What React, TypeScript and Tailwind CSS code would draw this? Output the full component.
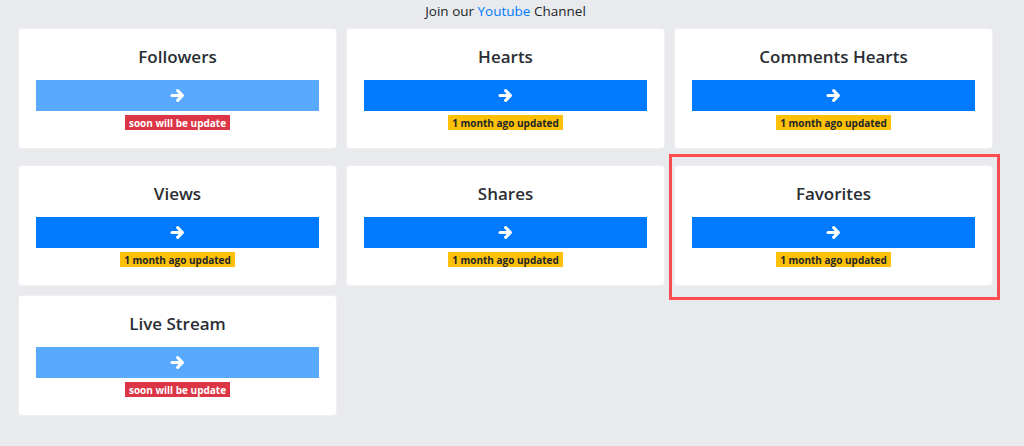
import React from 'react';

type Service = {
  title: string;
  active: boolean;
  highlight?: boolean;
};

const rows: Service[][] = [
  [
    { title: 'Followers', active: false },
    { title: 'Hearts', active: true },
    { title: 'Comments Hearts', active: true },
  ],
  [
    { title: 'Views', active: true },
    { title: 'Shares', active: true },
    { title: 'Favorites', active: true, highlight: true },
  ],
  [{ title: 'Live Stream', active: false }],
];

function ArrowRight() {
  return (
    <svg viewBox="0 0 16 16" className="w-[15px] h-[15px]" fill="none" stroke="white" strokeWidth={3.4} strokeLinecap="round" strokeLinejoin="round">
      <path d="M2.2 8h10.5" />
      <path d="M8.2 2.8 13.2 8l-5 5.2" />
    </svg>
  );
}

function ServiceCard({ service }: { service: Service }) {
  return (
    <div className="relative">
      {service.highlight && (
        <div className="absolute left-[-5px] top-[-11px] right-[-7px] bottom-[-14px] border-[3px] border-[#ff4d4f] pointer-events-none" />
      )}
      <div className="bg-white rounded-[4px] border border-black/[0.06] h-[121px] pt-[17px] px-[17px] flex flex-col items-center">
        <h5 className="text-[17px] leading-[22px] font-semibold text-[#2a2e33] mb-[12px]">
          {service.title}
        </h5>
        <button
          className={`w-full h-[31px] flex items-center justify-center ${
            service.active ? 'bg-[#007bff]' : 'bg-[#59a9ff]'
          }`}
        >
          <ArrowRight />
        </button>
        {service.active ? (
          <span className="mt-[4px] h-[15px] px-[4px] flex items-center bg-[#ffc107] text-[#212529] text-[10px] font-bold leading-none">
            1 month ago updated
          </span>
        ) : (
          <span className="mt-[4px] h-[15px] px-[4px] flex items-center bg-[#dc3545] text-white text-[10px] font-bold leading-none">
            soon will be update
          </span>
        )}
      </div>
    </div>
  );
}

export default function App() {
  return (
    <div
      className="w-[1024px] h-[446px] bg-[#e9eaee] overflow-hidden"
      style={{ fontFamily: '"Open Sans", "Noto Sans", sans-serif' }}
    >
      <div className="w-[975px] ml-[18px]">
        <p className="h-[28px] pt-[1px] text-center text-[13.5px] leading-[20px] font-medium text-[#212529]">
          Join our <span className="text-[#007bff]">Youtube</span> Channel
        </p>
        <div className="flex flex-col">
          {rows.map((row, i) => (
            <div
              key={i}
              className={`grid grid-cols-3 gap-x-[9px] ${i === 1 ? 'mt-[16px]' : i === 2 ? 'mt-[9px]' : ''}`}
            >
              {row.map((s) => (
                <ServiceCard key={s.title} service={s} />
              ))}
            </div>
          ))}
        </div>
      </div>
    </div>
  );
}
